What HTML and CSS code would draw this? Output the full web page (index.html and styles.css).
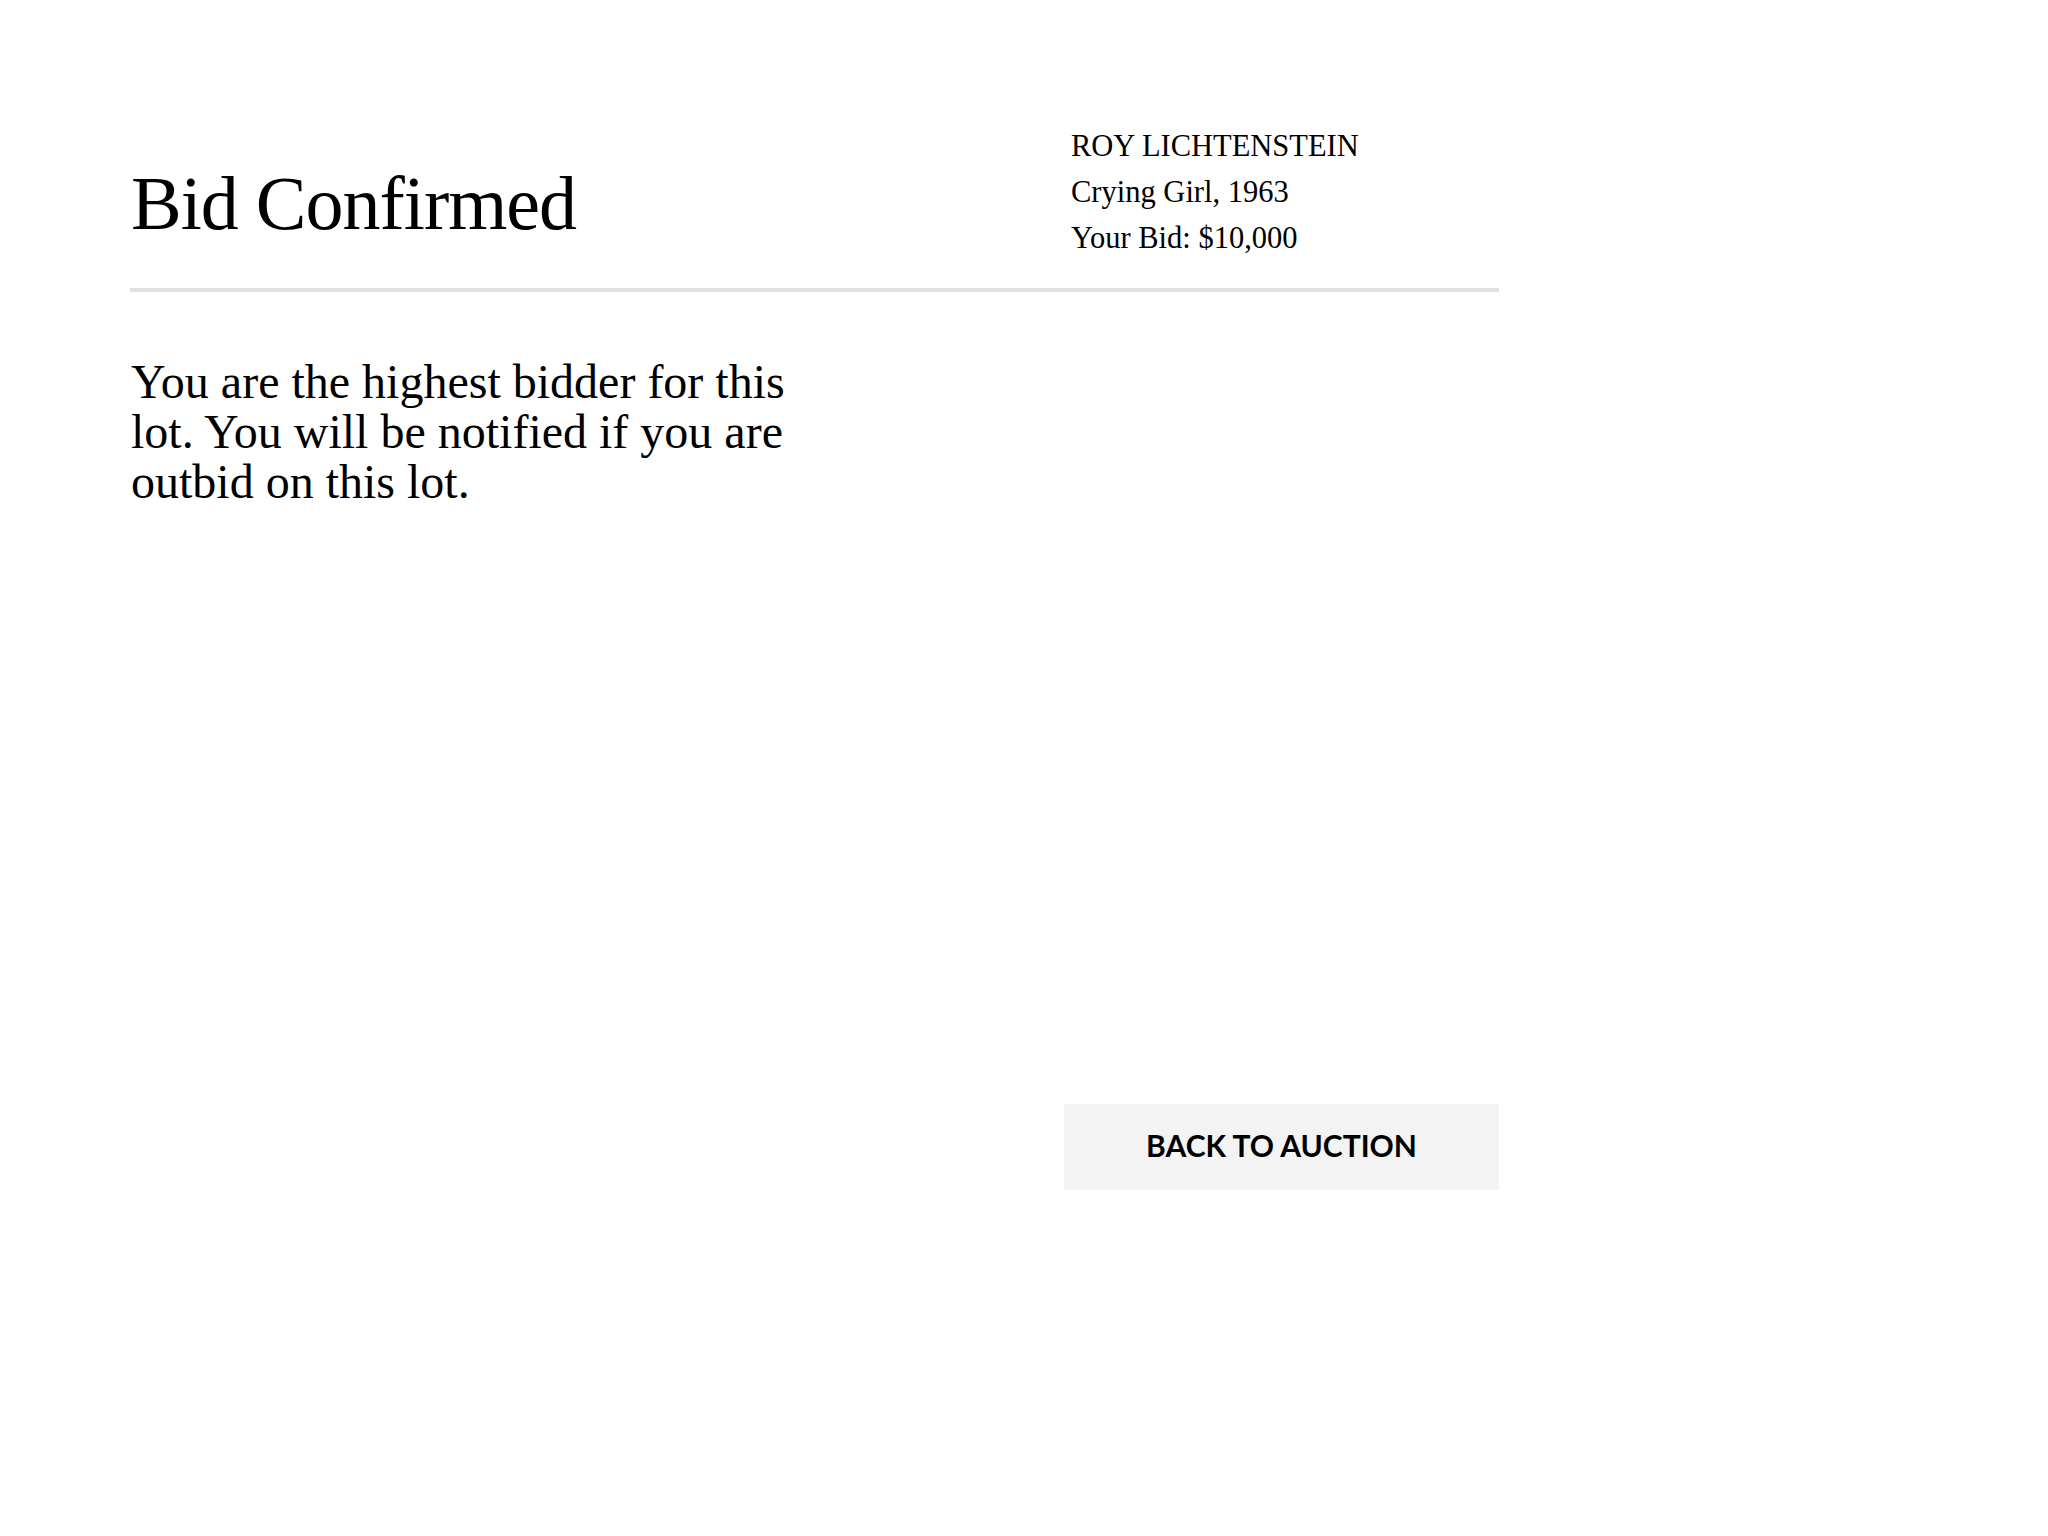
FILE: index.html
```
<!DOCTYPE html>
<html lang="en">
<head>
<meta charset="utf-8">
<title>Bid Confirmed</title>
<link rel="stylesheet" href="styles.css">
</head>
<body>
<div class="page">
  <header class="header">
    <h1 class="title">Bid Confirmed</h1>
    <div class="meta">
      <div class="meta-line">ROY LICHTENSTEIN</div>
      <div class="meta-line">Crying Girl, 1963</div>
      <div class="meta-line">Your Bid: $10,000</div>
    </div>
  </header>
  <main class="content">
    <p class="message">You are the highest bidder for this lot. You will be notified if you are outbid on this lot.</p>
    <div class="actions">
      <button class="back-btn" type="button">BACK TO AUCTION</button>
    </div>
  </main>
</div>
</body>
</html>
```

FILE: styles.css
```
html, body {
  margin: 0;
  padding: 0;
  background: #ffffff;
}

body {
  font-family: "Liberation Serif", "Times New Roman", serif;
  color: #000000;
}

.page {
  width: 1369px;
  margin-left: 130px;
}

.header {
  display: grid;
  grid-template-columns: 1fr 435px;
  align-items: end;
  padding-top: 123px;
  padding-bottom: 27px;
  border-bottom: 4px solid #e0e0e0;
}

.title {
  margin: 0 0 20px 1px;
  font-weight: normal;
  font-size: 76px;
  line-height: 76px;
  letter-spacing: -1px;
}

.meta {
  padding-left: 7px;
  font-size: 30.5px;
  line-height: 46px;
}

.content {
  display: grid;
  grid-template-columns: 1fr 435px;
  min-height: 898px;
}

.message {
  margin: 65px 0 0 1px;
  width: 690px;
  font-size: 48px;
  line-height: 50px;
}

.actions {
  display: flex;
  flex-direction: column;
  justify-content: flex-end;
}

.back-btn {
  display: block;
  width: 435px;
  height: 86px;
  border: none;
  margin: 0;
  padding: 0 0 5px 0;
  background: #f3f3f3;
  color: #000000;
  font-family: "Lato", "Liberation Sans", sans-serif;
  font-weight: 700;
  font-size: 30px;
  cursor: pointer;
}
```
